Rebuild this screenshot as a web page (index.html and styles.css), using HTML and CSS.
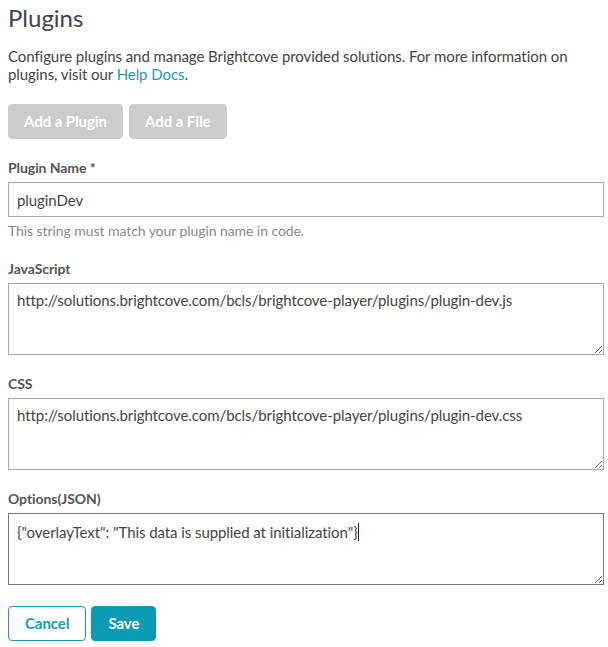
FILE: index.html
```html
<!DOCTYPE html>
<html lang="en">
<head>
<meta charset="utf-8">
<title>Plugins</title>
<link rel="stylesheet" href="styles.css">
</head>
<body>
<div class="page">
  <h1 class="title">Plugins</h1>
  <p class="intro">Configure plugins and manage Brightcove provided solutions. For more information on plugins, visit our <a class="link" href="#">Help Docs</a>.</p>
  <div class="actions">
    <button class="btn btn-disabled" type="button">Add a Plugin</button>
    <button class="btn btn-disabled" type="button">Add a File</button>
  </div>

  <div class="field field-first">
    <label class="label" for="name">Plugin Name *</label>
    <input class="input" id="name" type="text" value="pluginDev">
    <div class="help">This string must match your plugin name in code.</div>
  </div>

  <div class="field field-after-help">
    <label class="label" for="js">JavaScript</label>
    <textarea class="textarea" id="js">http://solutions.brightcove.com/bcls/brightcove-player/plugins/plugin-dev.js</textarea>
  </div>

  <div class="field">
    <label class="label" for="css">CSS</label>
    <textarea class="textarea" id="css">http://solutions.brightcove.com/bcls/brightcove-player/plugins/plugin-dev.css</textarea>
  </div>

  <div class="field">
    <label class="label">Options(JSON)</label>
    <div class="textarea textarea-focused">{"overlayText": "This data is supplied at initialization"}<span class="caret"></span></div>
  </div>

  <div class="footer">
    <button class="btn btn-outline" type="button">Cancel</button>
    <button class="btn btn-primary" type="button">Save</button>
  </div>
</div>
</body>
</html>
```

FILE: styles.css
```css
* { box-sizing: border-box; }
html, body { margin: 0; padding: 0; background: #fff; }
body {
  font-family: Lato, "Open Sans", "Liberation Sans", sans-serif;
  color: #444;
  letter-spacing: -0.07px;
}
.page {
  width: 608px;
  padding: 3px 4px 8px 8px;
}
.title {
  margin: 0;
  font-size: 24px;
  line-height: 29px;
  font-weight: 400;
  color: #444;
  letter-spacing: 0;
}
.intro {
  margin: 15px 0 0;
  font-size: 15px;
  line-height: 18px;
  color: #444;
}
.link { color: #1a9bb5; text-decoration: none; }
.actions {
  display: flex;
  gap: 6px;
  margin-top: 21px;
}
.btn {
  height: 35px;
  padding: 0 15px;
  border: 1px solid transparent;
  border-radius: 4px;
  font-family: inherit;
  font-size: 15px;
  font-weight: 700;
  line-height: 33px;
  letter-spacing: -0.07px;
  cursor: pointer;
}
.btn-disabled {
  background: #cccccc;
  color: #fff;
  border-color: #cccccc;
}
.field { margin-top: 19px; }
.field-first { margin-top: 19px; }
.field-after-help { margin-top: 18px; }
.label {
  display: block;
  font-size: 14px;
  line-height: 20px;
  font-weight: 700;
  color: #555;
  margin-bottom: 4px;
}
.input {
  display: block;
  width: 596px;
  height: 35px;
  padding: 0 8px;
  border: 1px solid #aaa;
  border-radius: 0;
  font-family: inherit;
  font-size: 15px;
  letter-spacing: -0.07px;
  color: #444;
  outline: none;
}
.help {
  margin-top: 4px;
  font-size: 14px;
  line-height: 20px;
  color: #888;
}
.textarea {
  display: block;
  width: 596px;
  height: 72px;
  padding: 7px 8px;
  border: 1px solid #aaa;
  border-radius: 0;
  font-family: inherit;
  font-size: 15px;
  line-height: 18px;
  letter-spacing: -0.07px;
  color: #444;
  resize: both;
  overflow: auto;
  outline: none;
  margin: 0;
}
.textarea-focused { border-color: #777; padding-top: 9px; }
.caret {
  display: inline-block;
  width: 1px;
  height: 18px;
  background: #222;
  vertical-align: top;
}
.footer {
  display: flex;
  gap: 5px;
  margin-top: 21px;
}
.btn-outline {
  padding: 0 16px;
  background: #fff;
  color: #1a9bb5;
  border-color: #1a9bb5;
}
.btn-primary {
  padding: 0 16px;
  background: #0a9ab4;
  color: #fff;
  border-color: #0a9ab4;
}
```
